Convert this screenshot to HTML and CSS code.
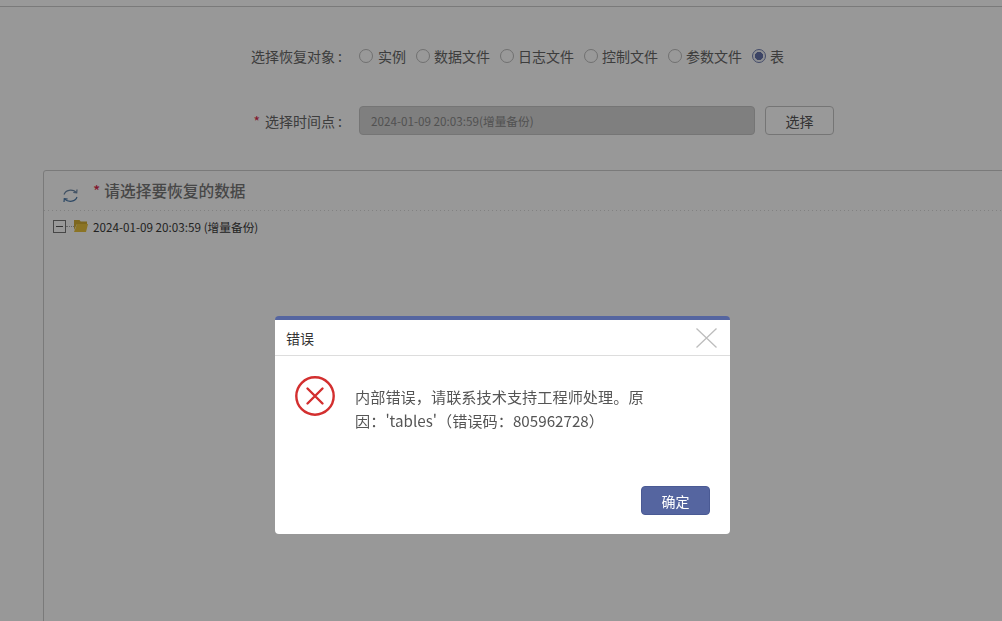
FILE: index.html
```html
<!DOCTYPE html>
<html lang="zh-CN">
<head>
<meta charset="utf-8">
<title>错误</title>
<link rel="stylesheet" href="styles.css">
</head>
<body>
<main class="page">
  <div class="form-row row-object">
    <span class="label">选择恢复对象 :</span>
    <div class="radios">
      <label class="radio"><i class="dot"></i>实例</label>
      <label class="radio"><i class="dot"></i>数据文件</label>
      <label class="radio"><i class="dot"></i>日志文件</label>
      <label class="radio"><i class="dot"></i>控制文件</label>
      <label class="radio"><i class="dot"></i>参数文件</label>
      <label class="radio"><i class="dot on"></i>表</label>
    </div>
  </div>
  <div class="form-row row-time">
    <span class="label"><b class="req">*</b>选择时间点 :</span>
    <div class="time-input">2024-01-09 20:03:59(增量备份)</div>
    <button class="pick">选择</button>
  </div>
  <section class="panel">
    <header class="panel-head">
      <svg class="refresh" viewBox="0 0 15 17" width="15" height="17" fill="none" stroke-width="1.200">
        <path d="M1 7.500C2.500 3 9 1.500 13.500 5.500" stroke="#6b87a6"/>
        <path d="M14 2.500l-.3 3.400-3.400-.4" stroke="#6b87a6"/>
        <path d="M14 10C12.500 14.500 6 16 1.500 12" stroke="#4a78a8"/>
        <path d="M1 15l.3-3.400 3.400.4" stroke="#4a78a8"/>
      </svg>
      <h2 class="panel-title"><b class="req">*</b>请选择要恢复的数据</h2>
    </header>
    <div class="tree-row">
      <span class="toggle"></span>
      <span class="tree-dots"></span>
      <svg class="folder" viewBox="0 0 14 13" width="14" height="13">
        <path d="M0 1h5.500l1.200 1.600H13V5H3L0 11z" fill="#d0ac35"/>
        <path d="M3 5h11l-2 8H0z" fill="#e8c23e"/>
      </svg>
      <span class="tree-text">2024-01-09 20:03:59 (增量备份)</span>
    </div>
  </section>
</main>

<div class="overlay"></div>

<div class="dialog" role="dialog">
  <header class="dialog-head">
    <span>错误</span>
    <svg class="close" viewBox="0 0 21 20" width="21" height="20" fill="none" stroke="#bdbdbd" stroke-width="1.3">
      <path d="M.5.5l20 19M20.500.5l-20 19"/>
    </svg>
  </header>
  <div class="dialog-body">
    <svg class="err" viewBox="0 0 40 40" width="40" height="40" fill="none" stroke="#d32f2f">
      <circle cx="20" cy="20" r="18.700" stroke-width="2.4"/>
      <path d="M12.500 12.500l15 15M27.500 12.500l-15 15" stroke-width="2.400" stroke-linecap="round"/>
    </svg>
    <p class="msg">内部错误，请联系技术支持工程师处理。原因：'tables'（错误码：805962728）</p>
  </div>
  <footer class="dialog-foot">
    <button class="ok">确定</button>
  </footer>
</div>
</body>
</html>
```
FILE: styles.css
```css
* { box-sizing: border-box; }
html, body { margin: 0; height: 100%; overflow: hidden; }
body {
  background: #fff;
  color: #666;
  font-family: "Noto Sans CJK SC", "Noto Sans", sans-serif;
  font-size: 14px;
}
.page {
  height: 621px;
  margin-top: 6px;
  border-top: 1px solid #ccc;
  background: #fdfdfd;
  overflow: hidden;
}
.form-row { display: flex; align-items: center; }
.row-object { margin-top: 35px; height: 28px; }
.row-time { margin-top: 36px; height: 29px; }
.label {
  width: 342px;
  text-align: right;
  margin-right: 17px;
  line-height: 20px;
  white-space: nowrap;
}
.req { color: #d9264a; font-weight: 400; margin-right: 5px; }
.radios { display: flex; gap: 10px; }
.radio { display: flex; align-items: center; line-height: 20px; }
.dot {
  width: 14px; height: 14px;
  margin-right: 4px;
  border: 1px solid #bbb;
  border-radius: 50%;
  background: #fff;
}
.radio:first-child .dot { margin-right: 5px; }
.dot.on {
  border-color: #7380b0;
  background: radial-gradient(circle, #6572a8 0 3.800px, #eef0f6 4.400px);
}
.time-input {
  width: 396px; height: 29px;
  padding-left: 11px;
  line-height: 28px;
  font-size: 11.700px;
  color: #888;
  background: #d4d4d4;
  border: 1px solid #c4c4c4;
  border-radius: 4px;
}
.pick {
  width: 69px; height: 29px;
  margin-left: 10px;
  font: inherit;
  color: #555;
  background: #fff;
  border: 1px solid #c4c4c4;
  border-radius: 4px;
}
.panel {
  margin: 35px -4px 0 43px;
  height: 460px;
  border: 1px solid #ccc;
  border-radius: 3px 0 0 0;
}
.panel-head {
  display: flex;
  align-items: center;
  height: 40px;
  padding-left: 19px;
  background: repeating-linear-gradient(to right, #d8d8d8 0 1px, transparent 1px 4px) left bottom / 100% 1px no-repeat;
}
.refresh { margin-top: 9px; flex: none; }
.panel-title {
  margin: 0 0 0 15px;
  font-size: 15.700px;
  font-weight: 500;
  line-height: 22px;
  color: #777;
}
.panel-title .req { margin-right: 4px; }
.tree-row { display: flex; align-items: center; height: 30px; padding-left: 9px; }
.toggle {
  position: relative;
  width: 13px; height: 13px;
  border: 1px solid #777;
  background: #fff;
}
.toggle::after {
  content: "";
  position: absolute;
  left: 2px; right: 2px; top: 5px;
  height: 1px;
  background: #555;
}
.tree-dots { width: 8px; border-top: 1px dotted #aaa; }
.folder { margin: -2px 5px 0 0; flex: none; }
.tree-text { font-size: 11.700px; color: #3a3a3a; }
.overlay {
  position: fixed;
  inset: 0;
  background: rgba(0, 0, 0, .4);
}
.dialog {
  position: fixed;
  left: 275px; top: 316px;
  width: 455px; height: 218px;
  display: flex;
  flex-direction: column;
  background: #fff;
  border-top: 4px solid #5565a0;
  border-radius: 4px;
}
.dialog-head {
  display: flex;
  align-items: center;
  justify-content: space-between;
  height: 36px;
  padding: 0 13px 0 11px;
  border-bottom: 1px solid #ddd;
  flex: none;
  font-size: 14px;
  color: #333;
}
.dialog-body { display: flex; flex: 1; padding: 20px 0 0 20px; }
.err { flex: none; }
.msg {
  margin: 8px 0 0 20px;
  width: 296px;
  font-size: 15.200px;
  line-height: 24px;
  color: #555;
}
.dialog-foot { display: flex; justify-content: flex-end; padding: 0 20px 19px 0; flex: none; }
.ok {
  width: 69px; height: 29px;
  font: inherit;
  color: #fff;
  background: #5565a0;
  border: 1px solid #4a5a94;
  border-radius: 4px;
}
```
